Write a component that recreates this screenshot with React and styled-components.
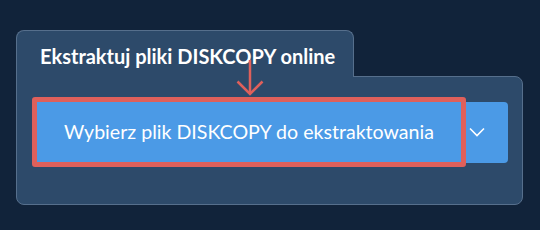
import React from "react";
import styled, { createGlobalStyle } from "styled-components";

const Global = createGlobalStyle`
  html, body { margin: 0; padding: 0; background: #11233a; }
  body { font-family: Lato, "Noto Sans", sans-serif; }
`;

const Page = styled.div`
  width: 540px;
  height: 230px;
  box-sizing: border-box;
  padding: 30px 0 0 16px;
  display: flex;
  flex-direction: column;
  align-items: flex-start;
`;

const Tab = styled.div`
  position: relative;
  z-index: 1;
  box-sizing: border-box;
  width: 338px;
  height: 47px;
  margin-bottom: -1px;
  padding: 13px 0 0 23px;
  background: #2d4a6a;
  border: 1px solid #566f8c;
  border-bottom: none;
  border-radius: 8px 8px 0 0;
  color: #ffffff;
  font-weight: 700;
  font-size: 20px;
  line-height: 24px;
  white-space: nowrap;
`;

const Panel = styled.div`
  position: relative;
  box-sizing: border-box;
  width: 507px;
  height: 129px;
  padding: 20px 0 0 15px;
  background: #2d4a6a;
  border: 1px solid #566f8c;
  border-radius: 0 8px 8px 8px;
`;

const Arrow = styled.svg`
  position: absolute;
  left: 219px;
  top: -17px;
  z-index: 2;
`;

const Group = styled.div`
  display: flex;
  align-items: center;
`;

const MainButton = styled.div`
  box-sizing: border-box;
  width: 434px;
  height: 70px;
  border: 5px solid #df605b;
  border-radius: 3px;
  background: #4b9ae6;
  color: #ffffff;
  font-size: 19.6px;
  display: flex;
  align-items: center;
  justify-content: center;
  white-space: nowrap;
  padding-bottom: 1px;
`;

const DropButton = styled.div`
  box-sizing: border-box;
  width: 42px;
  height: 61px;
  background: #4b9ae6;
  border-radius: 0 4px 4px 0;
  display: flex;
  align-items: center;
  padding-left: 3px;
`;

export default function App() {
  return (
    <>
      <Global />
      <Page>
        <Tab>Ekstraktuj pliki DISKCOPY online</Tab>
        <Panel>
          <Arrow width="30" height="38" viewBox="0 0 30 38">
            <path d="M14 0 V34" stroke="#df605b" strokeWidth="2.5" fill="none" />
            <path d="M1.5 21.5 L14 34 L26.5 21.5" stroke="#df605b" strokeWidth="2.5" fill="none" />
          </Arrow>
          <Group>
            <MainButton>Wybierz plik DISKCOPY do ekstraktowania</MainButton>
            <DropButton>
              <svg width="16" height="10" viewBox="0 0 16 10">
                <path d="M1 1.5 L8 8.5 L15 1.5" stroke="#ffffff" strokeWidth="1.6" fill="none" />
              </svg>
            </DropButton>
          </Group>
        </Panel>
      </Page>
    </>
  );
}
